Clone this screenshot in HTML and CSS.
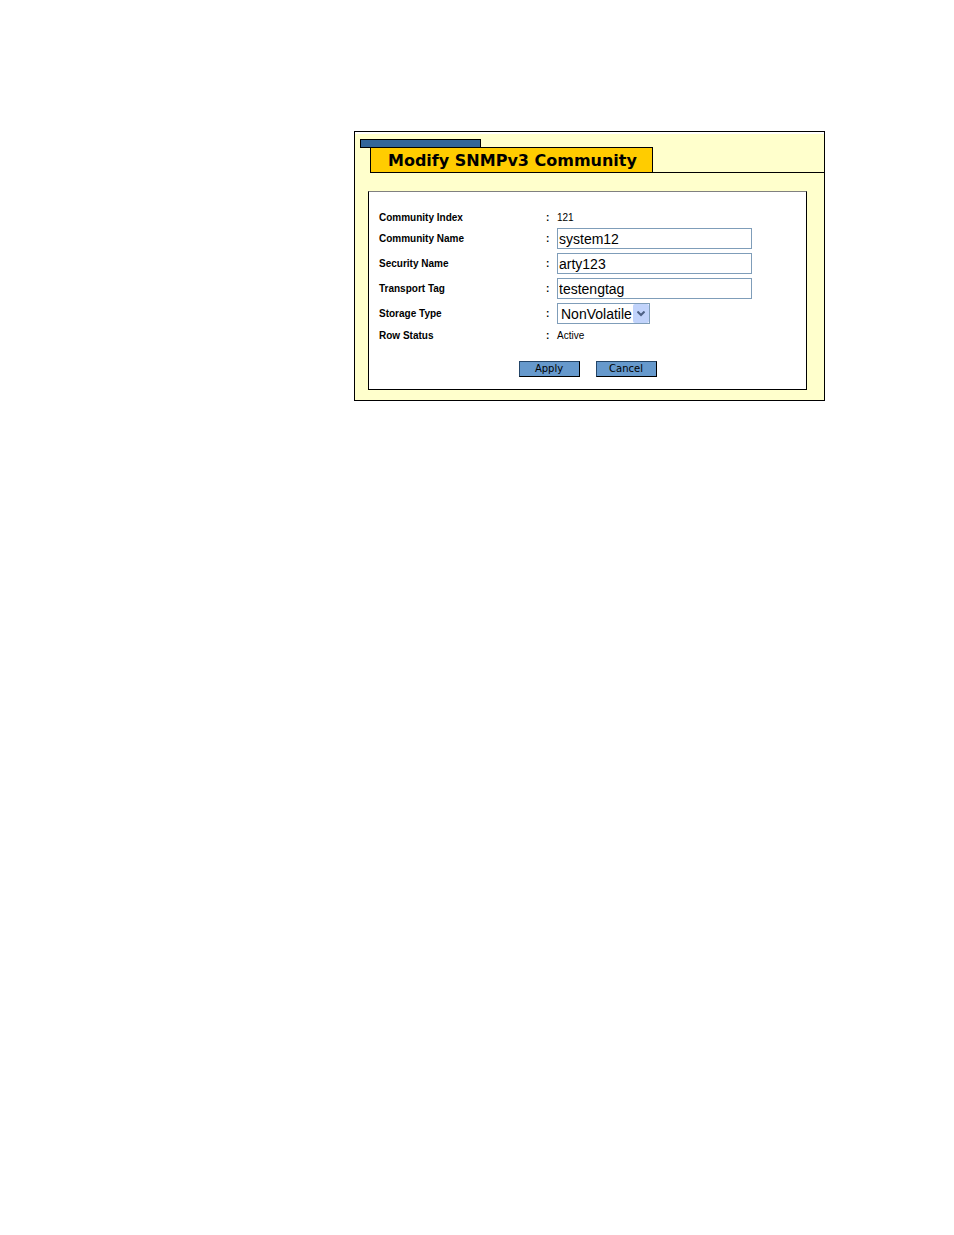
FILE: index.html
```
<!DOCTYPE html>
<html lang="en">
<head>
    <meta charset="UTF-8">
    <meta name="viewport" content="width=device-width, initial-scale=1.0">
    <title>Modify SNMPv3 Community</title>
    <link rel="stylesheet" href="styles.css">
</head>
<body>
    <div class="panel">
        <div class="header">
            <div class="header-bar"></div>
            <div class="title-row">
                <h1 class="title">Modify SNMPv3 Community</h1>
            </div>
        </div>

        <form class="form-box">
            <div class="row row-text">
                <span class="label">Community Index</span>
                <span class="colon">:</span>
                <span class="value">121</span>
            </div>
            <div class="row">
                <label class="label" for="community-name">Community Name</label>
                <span class="colon">:</span>
                <input class="text-input" type="text" id="community-name" value="system12">
            </div>
            <div class="row">
                <label class="label" for="security-name">Security Name</label>
                <span class="colon">:</span>
                <input class="text-input" type="text" id="security-name" value="arty123">
            </div>
            <div class="row">
                <label class="label" for="transport-tag">Transport Tag</label>
                <span class="colon">:</span>
                <input class="text-input" type="text" id="transport-tag" value="testengtag">
            </div>
            <div class="row">
                <label class="label" for="storage-type">Storage Type</label>
                <span class="colon">:</span>
                <div class="select-wrap">
                    <select class="select" id="storage-type">
                        <option>NonVolatile</option>
                    </select>
                    <span class="select-arrow">
                        <svg width="8" height="6" viewBox="0 0 8 6"><path d="M0.5 0.5l3.5 3.5 3.5-3.5" fill="none" stroke="#4d6185" stroke-width="2"/></svg>
                    </span>
                </div>
            </div>
            <div class="row row-text">
                <span class="label">Row Status</span>
                <span class="colon">:</span>
                <span class="value">Active</span>
            </div>

            <div class="buttons">
                <button class="btn" type="button">Apply</button>
                <button class="btn" type="button">Cancel</button>
            </div>
        </form>
    </div>
</body>
</html>
```
FILE: styles.css
```
* {
    box-sizing: border-box;
}
body {
    margin: 0;
    padding: 131px 129px 40px 354px;
    background-color: #fff;
    color: #000;
    font-family: "Liberation Sans", Arial, sans-serif;
    font-size: 10px;
}
.panel {
    border: 1px solid #000;
    background-color: #ffffcc;
    padding-bottom: 10px;
}
.header {
    border-top: 2px solid #fff;
    padding: 5px 0 0 5px;
}
.header-bar {
    width: 121px;
    height: 9px;
    margin-bottom: -1px;
    border: 1px solid #000;
    background-color: #336699;
}
.title-row {
    display: flex;
    margin-left: 10px;
    border-bottom: 1px solid #000;
}
.title {
    margin: 0;
    padding: 2px 15px 0 17px;
    border: 1px solid #000;
    border-bottom: none;
    background-color: #ffcc00;
    font-family: "DejaVu Sans", Verdana, sans-serif;
    font-size: 16px;
    font-weight: bold;
    line-height: 22px;
    white-space: nowrap;
}
.form-box {
    margin: 18px 17px 0 13px;
    padding: 16px 10px 12px;
    border: 1px solid #000;
    border-top-color: #808080;
    background-color: #fff;
}
.row {
    display: grid;
    grid-template-columns: 167px 11px 1fr;
    align-items: center;
    height: 25px;
}
.row-text {
    height: 18px;
}
.label,
.colon {
    font-weight: bold;
}
.text-input {
    width: 195px;
    height: 21px;
    padding: 0 1px;
    border: 1px solid #7f9db9;
    background-color: #fff;
    color: #000;
    font-family: inherit;
    font-size: 14px;
}
.select-wrap {
    position: relative;
    width: 93px;
    height: 21px;
}
.select {
    appearance: none;
    display: block;
    width: 100%;
    height: 100%;
    padding: 0 0 0 3px;
    border: 1px solid #7f9db9;
    border-radius: 0;
    background-color: #fff;
    color: #000;
    font-family: inherit;
    font-size: 14px;
}
.select-arrow {
    position: absolute;
    top: 1px;
    right: 1px;
    bottom: 1px;
    display: flex;
    align-items: center;
    justify-content: center;
    width: 16px;
    border-radius: 2px;
    background-color: #c1d3fb;
    pointer-events: none;
}
.buttons {
    display: flex;
    justify-content: center;
    gap: 16px;
    margin-top: 17px;
}
.btn {
    width: 61px;
    height: 16px;
    padding: 0;
    border: 1px solid #000;
    border-top-color: #24466a;
    border-left-color: #24466a;
    background-color: #6699cc;
    color: #000;
    font-family: "DejaVu Sans", Verdana, sans-serif;
    font-size: 10px;
    line-height: 14px;
}
```
